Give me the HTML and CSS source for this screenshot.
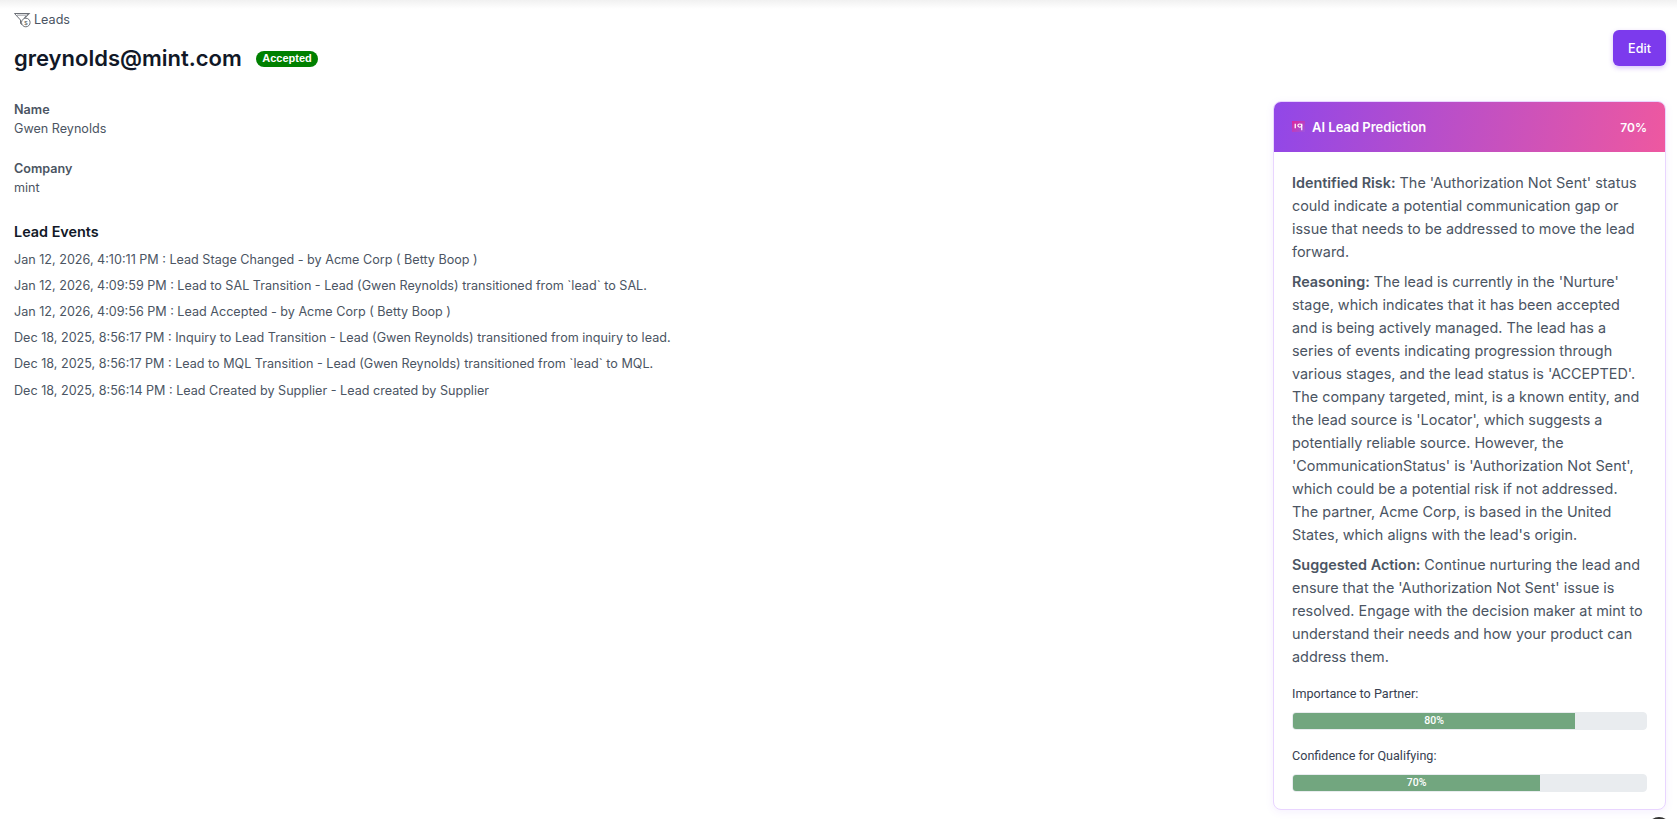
FILE: index.html
```html
<!DOCTYPE html>
<html lang="en">
<head>
<meta charset="utf-8">
<title>Lead</title>
<link rel="stylesheet" href="styles.css">
</head>
<body>
<div class="topshade"></div>
<main class="page">
  <nav class="crumb">
    <svg class="crumb-icon" viewBox="0 0 18 16" width="18" height="16" fill="none" stroke="#6b6f76" stroke-width="1">
      <path d="M0.5 1.5h14.5L10.5 6" stroke-width="1.2"/>
      <path d="M0.5 1.5l6 6.5v3.5l1.5 1"/>
      <path d="M3 3.2h10" stroke="#b5b7bb" stroke-width="1.4"/>
      <circle cx="11.8" cy="10.5" r="4.3"/>
      <text x="11.8" y="13" class="crumb-dollar">$</text>
    </svg>
    <span>Leads</span>
  </nav>
  <header class="head">
    <div class="title-row">
      <h1>greynolds@mint.com</h1>
      <span class="badge">Accepted</span>
    </div>
    <button class="edit">Edit</button>
  </header>
  <div class="columns">
    <section class="details">
      <div class="field">
        <div class="label">Name</div>
        <div class="value">Gwen Reynolds</div>
      </div>
      <div class="field">
        <div class="label">Company</div>
        <div class="value">mint</div>
      </div>
      <h2>Lead Events</h2>
      <ul class="events">
        <li>Jan 12, 2026, 4:10:11 PM : Lead Stage Changed - by Acme Corp ( Betty Boop )</li>
        <li>Jan 12, 2026, 4:09:59 PM : Lead to SAL Transition - Lead (Gwen Reynolds) transitioned from `lead` to SAL.</li>
        <li>Jan 12, 2026, 4:09:56 PM : Lead Accepted - by Acme Corp ( Betty Boop )</li>
        <li>Dec 18, 2025, 8:56:17 PM : Inquiry to Lead Transition - Lead (Gwen Reynolds) transitioned from inquiry to lead.</li>
        <li>Dec 18, 2025, 8:56:17 PM : Lead to MQL Transition - Lead (Gwen Reynolds) transitioned from `lead` to MQL.</li>
        <li>Dec 18, 2025, 8:56:14 PM : Lead Created by Supplier - Lead created by Supplier</li>
      </ul>
    </section>
    <aside class="card">
      <div class="card-head">
        <div class="card-title">
          <svg class="iq" viewBox="0 0 12 12" width="13" height="11" preserveAspectRatio="none">
            <defs><linearGradient id="iqg" x1="0" y1="0" x2="1" y2="1"><stop offset="0" stop-color="#e0259a"/><stop offset="1" stop-color="#9a55e0"/></linearGradient></defs>
            <rect width="12" height="12" fill="url(#iqg)"/>
            <path d="M3 3v5" stroke="#fff" stroke-width="1.2"/>
            <circle cx="7.2" cy="5" r="1.8" fill="none" stroke="#fff" stroke-width="1.1"/>
            <path d="M9 3v7" stroke="#fff" stroke-width="1.1"/>
          </svg>
          <span>AI Lead Prediction</span>
        </div>
        <span class="pct">70%</span>
      </div>
      <div class="card-body">
        <p><b>Identified Risk:</b> The 'Authorization Not Sent' status could indicate a potential communication gap or issue that needs to be addressed to move the lead forward.</p>
        <p><b>Reasoning:</b> The lead is currently in the 'Nurture' stage, which indicates that it has been accepted and is being actively managed. The lead has a series of events indicating progression through various stages, and the lead status is 'ACCEPTED'. The company targeted, mint, is a known entity, and the lead source is 'Locator', which suggests a potentially reliable source. However, the 'CommunicationStatus' is 'Authorization Not Sent', which could be a potential risk if not addressed. The partner, Acme Corp, is based in the United States, which aligns with the lead's origin.</p>
        <p><b>Suggested Action:</b> Continue nurturing the lead and ensure that the 'Authorization Not Sent' issue is resolved. Engage with the decision maker at mint to understand their needs and how your product can address them.</p>
        <div class="metric">
          <div class="metric-label">Importance to Partner:</div>
          <div class="track"><div class="fill" style="width:80%">80%</div></div>
        </div>
        <div class="metric">
          <div class="metric-label">Confidence for Qualifying:</div>
          <div class="track"><div class="fill" style="width:70%">70%</div></div>
        </div>
      </div>
    </aside>
  </div>
</main>
<div class="chat"></div>
</body>
</html>
```
FILE: styles.css
```css
* { box-sizing: border-box; }
html, body { margin: 0; height: 100%; overflow: hidden; background: #fff; }
body { font-family: Inter, "Liberation Sans", sans-serif; color: #4b5563; position: relative; }
.topshade { position: absolute; left: 0; right: 0; top: 0; height: 9px; background: linear-gradient(#f1f1f1, #fff); }
.page { padding: 12px 11px 0 14px; position: relative; }
.crumb { display: flex; align-items: center; gap: 2px; height: 15px; font-size: 12.6px; color: #4b5563; }
.crumb-icon { flex: none; margin-top: 1px; }
.crumb-dollar { font-size: 6px; fill: #555; stroke: none; text-anchor: middle; font-family: "Liberation Sans", sans-serif; }
.head { display: flex; justify-content: space-between; align-items: flex-start; margin-top: 3px; }
.title-row { display: flex; align-items: center; gap: 14px; margin-top: 14px; }
h1 { margin: 0; font-size: 22px; line-height: 28px; font-weight: 600; color: #111827; }
.badge { background: #008000; color: #fff; font-family: "Liberation Sans", sans-serif; font-weight: 700; font-size: 11px; line-height: 14px; height: 16px; margin-top: 2px; padding: 0 6.5px; border-radius: 8px; }
.edit { width: 53px; height: 36px; border: 0; border-radius: 6px; background: #7c3aed; color: #fff; font: 500 12.6px Inter, sans-serif; box-shadow: 0 2px 5px rgba(124, 58, 237, .3); }
.columns { display: flex; justify-content: space-between; align-items: flex-start; margin-top: 29px; }
.field { margin-bottom: 21px; font-size: 12.6px; line-height: 18.9px; }
.label { font-weight: 600; color: #4b5563; }
.value { color: #4b5563; }
h2 { margin: 24px 0 5px; font-size: 14.4px; line-height: 20px; font-weight: 600; color: #111827; }
.events { list-style: none; margin: 0; padding: 0; font-size: 12.6px; line-height: 26.2px; }
.card { width: 393px; height: 709px; border: 1px solid #e9d5ff; border-radius: 8px; overflow: hidden; box-shadow: 0 2px 8px rgba(124, 58, 237, .08); background: #fff; }
.card-head { height: 50px; padding: 0 18px; display: flex; justify-content: space-between; align-items: center; background: linear-gradient(100deg, #9147e8, #ee58a0); color: #fff; font-size: 13px; font-weight: 600; }
.card-title { display: flex; align-items: center; gap: 7px; }
.pct { font-size: 12px; }
.iq { flex: none; margin-top: -1px; }
.card-body { padding: 18.5px 18px 0; }
.card-body p { margin: 0 0 7px; font-size: 14.4px; line-height: 23.04px; color: #4b5563; }
.card-body b { font-weight: 600; }
.metric { margin-top: 17px; }
.metric-label { font-family: Roboto, sans-serif; font-size: 12.6px; line-height: 18px; color: #374151; }
.track { margin-top: 9px; height: 18px; border: 1px solid #e9ecef; border-radius: 4px; background: #e9ecef; overflow: hidden; }
.fill { height: 100%; background: #72a67f; color: #fff; font-family: Roboto, sans-serif; font-size: 10.5px; font-weight: 500; line-height: 15px; text-align: center; }
.chat { position: absolute; left: 1647px; top: 817px; width: 24px; height: 24px; border-radius: 50%; background: #333; }
```
